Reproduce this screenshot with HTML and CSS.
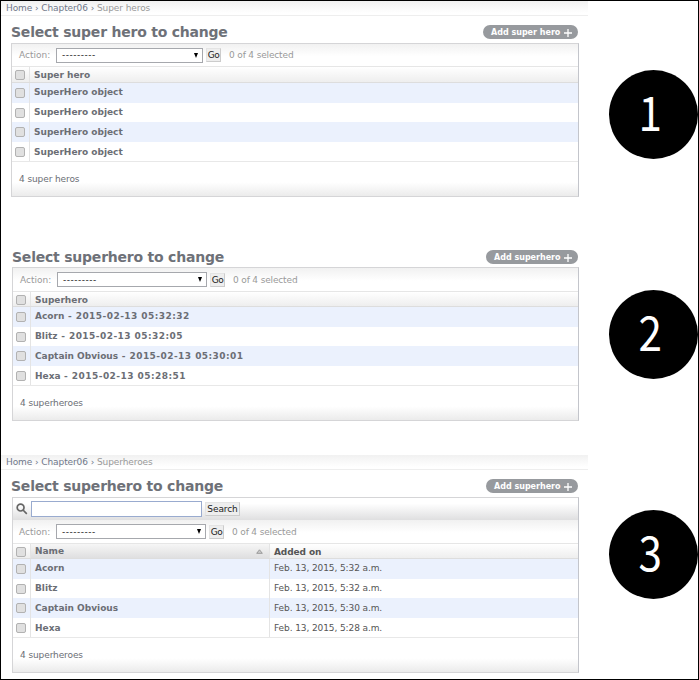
FILE: index.html
```
<!DOCTYPE html>
<html lang="en">
<head>
<meta charset="utf-8">
<title>Select superhero to change</title>
<link rel="stylesheet" href="styles.css">
</head>
<body>
<main class="figure">
  <section class="step step-one">
    <div class="admin">
      <nav class="crumbs"><span class="home">Home › Chapter06 ›</span> <span>Super heros</span></nav>
      <header class="heading"><h1>Select super hero to change</h1><a class="add">Add super hero <svg width="8" height="8" viewBox="0 0 8 8"><path d="M4 0V8M0 4H8"/></svg></a></header>
      <div class="panel">
        <div class="actions"><span class="label">Action:</span><span class="select"><span>---------</span><i></i></span><span class="button go">Go</span><span class="count">0 of 4 selected</span></div>
        <div class="row head"><div class="tick"><i></i></div><div class="cell"><b>Super hero</b></div></div>
        <div class="row blue"><div class="tick"><i></i></div><div class="cell"><b>SuperHero object</b></div></div>
        <div class="row short"><div class="tick"><i></i></div><div class="cell"><b>SuperHero object</b></div></div>
        <div class="row blue"><div class="tick"><i></i></div><div class="cell"><b>SuperHero object</b></div></div>
        <div class="row last"><div class="tick"><i></i></div><div class="cell"><b>SuperHero object</b></div></div>
        <footer class="total">4 super heros</footer>
      </div>
    </div>
    <div class="number"><span>1</span></div>
  </section>
  <section class="step step-two">
    <div class="admin">
      <header class="heading"><h1>Select superhero to change</h1><a class="add">Add superhero <svg width="8" height="8" viewBox="0 0 8 8"><path d="M4 0V8M0 4H8"/></svg></a></header>
      <div class="panel">
        <div class="actions"><span class="label">Action:</span><span class="select"><span>---------</span><i></i></span><span class="button go">Go</span><span class="count">0 of 4 selected</span></div>
        <div class="row head"><div class="tick"><i></i></div><div class="cell"><b>Superhero</b></div></div>
        <div class="row blue"><div class="tick"><i></i></div><div class="cell"><b>Acorn<span class="stamp"> - 2015-02-13 05:32:32</span></b></div></div>
        <div class="row short"><div class="tick"><i></i></div><div class="cell"><b>Blitz<span class="stamp"> - 2015-02-13 05:32:05</span></b></div></div>
        <div class="row blue"><div class="tick"><i></i></div><div class="cell"><b>Captain Obvious<span class="stamp"> - 2015-02-13 05:30:01</span></b></div></div>
        <div class="row last"><div class="tick"><i></i></div><div class="cell"><b>Hexa<span class="stamp"> - 2015-02-13 05:28:51</span></b></div></div>
        <footer class="total">4 superheroes</footer>
      </div>
    </div>
    <div class="number"><span>2</span></div>
  </section>
  <section class="step step-three">
    <div class="admin">
      <nav class="crumbs"><span class="home">Home › Chapter06 ›</span> <span>Superheroes</span></nav>
      <header class="heading"><h1>Select superhero to change</h1><a class="add">Add superhero <svg width="8" height="8" viewBox="0 0 8 8"><path d="M4 0V8M0 4H8"/></svg></a></header>
      <div class="panel">
        <div class="search"><svg class="lens" width="12" height="12" viewBox="0 0 12 12"><circle cx="4.6" cy="4.6" r="3.4"/><path d="M7 7L10.8 10.8"/></svg><span class="field"></span><span class="button">Search</span></div>
        <div class="actions"><span class="label">Action:</span><span class="select"><span>---------</span><i></i></span><span class="button go">Go</span><span class="count">0 of 4 selected</span></div>
        <div class="row head"><div class="tick"><i></i></div><div class="cell name sorted"><b>Name</b><svg width="7" height="5" viewBox="0 0 7 5"><path d="M.7 4.3L3.5 .8L6.3 4.3Z"/></svg></div><div class="cell date"><b>Added on</b></div></div>
        <div class="row blue"><div class="tick"><i></i></div><div class="cell name"><b>Acorn</b></div><div class="cell date">Feb. 13, 2015, 5:32 a.m.</div></div>
        <div class="row short"><div class="tick"><i></i></div><div class="cell name"><b>Blitz</b></div><div class="cell date">Feb. 13, 2015, 5:32 a.m.</div></div>
        <div class="row blue"><div class="tick"><i></i></div><div class="cell name"><b>Captain Obvious</b></div><div class="cell date">Feb. 13, 2015, 5:30 a.m.</div></div>
        <div class="row last"><div class="tick"><i></i></div><div class="cell name"><b>Hexa</b></div><div class="cell date">Feb. 13, 2015, 5:28 a.m.</div></div>
        <footer class="total">4 superheroes</footer>
      </div>
    </div>
    <div class="number"><span>3</span></div>
  </section>
</main>
</body>
</html>
```
FILE: styles.css
```
* { box-sizing: border-box; }
body { margin: 0; background: #fff; font: 9px/12px "DejaVu Sans", sans-serif; color: #6b6e75; }
.figure { width: 699px; height: 680px; border: 1px solid #000; overflow: hidden; }
.step { display: flex; justify-content: space-between; white-space: nowrap; }
.step-one { height: 246px; }
.step-two { height: 208px; }
.step-three { height: 223px; }
.admin { width: 587px; }
.crumbs { height: 15px; padding: 1px 0 0 5px; line-height: 13px; color: #999; background: linear-gradient(#f1f1f1, #fff 85%); border-bottom: 1px solid #eee; letter-spacing: -.09px; }
.crumbs .home { color: #70788a; }
.heading { display: flex; justify-content: space-between; align-items: center; height: 20px; margin: 0 10px 0 11px; }
.step-one .heading { margin: 6px 10px 1px 10px; }
.step-three .heading { margin: 6px 10px 1px 10px; }
h1 { margin: 0; font-size: 14px; line-height: 20px; color: #6e7178; letter-spacing: -.22px; }
.add { display: flex; align-items: center; justify-content: space-between; height: 14px; width: 92px; padding: 1px 6px 0 8px; border-radius: 7px; background: #979a9e; color: #fff; font-size: 8px; line-height: 14px; font-weight: bold; }
.step-one .add { width: 95px; }
.add path { stroke: #fff; stroke-width: 1.3; fill: none; }
.panel { margin-left: 11px; width: 567px; border: 1px solid #d5d5d7; border-right-color: #c3c5cb; }
.step-one .panel { margin-left: 10px; width: 568px; }
.actions { display: flex; align-items: center; height: 24px; padding-left: 7px; background: linear-gradient(#f1f1f1, #fff 55%); border-bottom: 1px solid #e6e6e6; color: #999; }
.step-one .actions { height: 23px; }
.label { width: 37px; }
.select { display: flex; align-items: center; justify-content: space-between; width: 150px; height: 15px; padding: 0 4px 0 5px; border: 1px solid #a6a8ad; background: #fff; color: #222; letter-spacing: .5px; margin-right: 3px; }
.step-one .select { width: 147px; }
.step-three .actions { padding-left: 6px; }
.select i { border: 2.5px solid transparent; border-top: 5px solid #000; border-bottom: 0; }
.button { height: 14px; border: 1px solid #ccc; border-top-color: #e4e4e4; border-left-color: #e4e4e4; background: #eee; color: #222; text-align: center; line-height: 12px; }
.go { width: 15px; margin-right: 8px; font-size: 9px; letter-spacing: -.5px; }
.count { letter-spacing: -.15px; }
.search { display: flex; align-items: center; height: 22px; padding-left: 3px; background: linear-gradient(#fff 25%, #dfdfe0); }
.lens { margin-right: 3px; fill: none; stroke: #666; stroke-width: 1.7; }
.field { width: 171px; height: 16px; border: 1px solid #99abcf; background: #fff; margin-right: 3px; }
.search .button { width: 35px; letter-spacing: -.1px; }
.row { display: flex; height: 20px; background: #fff; }
.row.blue { background: #ebf1fd; }
.row.short { height: 19px; }
.row.last { border-bottom: 1px solid #e8e8e8; }
.row.head { height: 15px; background: linear-gradient(#fff, #eee); border-bottom: 1px solid #ddd; }
.step-one .row.head { height: 16px; }
.tick { width: 18px; padding: 5px 0 0 3px; border-right: 1px solid #e4e4e4; }
.head .tick { padding-top: 3px; }
.tick i { display: block; width: 10px; height: 10px; border: 1px solid #b2b2b2; border-radius: 2px; background: #e0e0e0; }
.cell { padding-left: 4px; line-height: 19px; flex: 1; }
.short + .blue .cell, .last .cell { line-height: 21px; }
.head .cell { line-height: 16px; }
.stamp { letter-spacing: .45px; }
.cell.name { flex: 0 0 239px; border-right: 1px solid #e4e4e4; }
.cell.date { color: #555; letter-spacing: -.1px; }
.sorted { display: flex; align-items: center; justify-content: space-between; padding-right: 6px; background: linear-gradient(#f6f6f6, #dfdfe0); }
.sorted path { fill: #ccc; stroke: #999; }
.total { height: 34px; padding-left: 7px; line-height: 35px; letter-spacing: -.1px; background: linear-gradient(#fff 60%, #ebebeb); }
.number { width: 89px; height: 89px; flex: none; border-radius: 50%; background: #000; color: #fff; font: 400 48px/81px "Noto Sans CJK SC", sans-serif; text-align: center; padding-right: 6px; }
.number span { display: inline-block; transform: scaleX(.88); }
.step-one .number { margin-top: 69px; }
.step-two .number { margin-top: 43px; }
.step-three .number { margin-top: 55px; }
```
